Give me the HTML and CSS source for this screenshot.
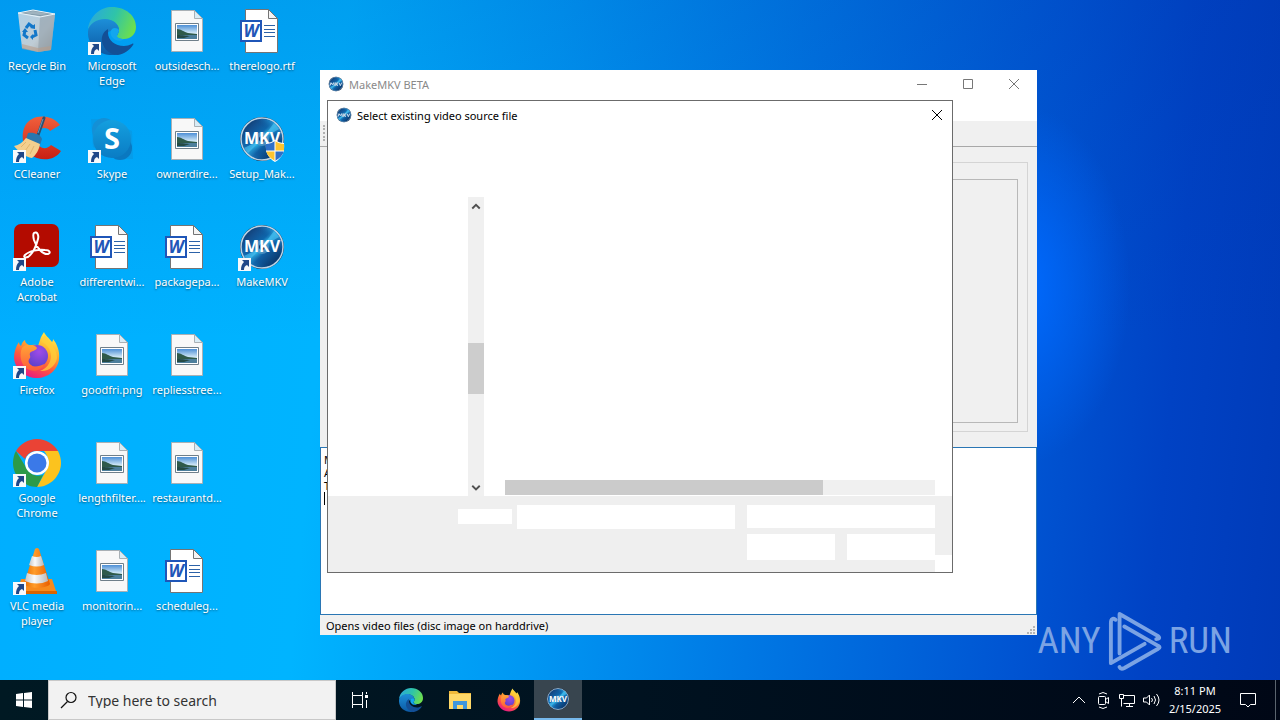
FILE: index.html
```html
<!DOCTYPE html>
<html lang="en">
<head>
  <meta charset="UTF-8" />
  <meta name="viewport" content="width=device-width, initial-scale=1.0"/>
  <title>Desktop</title>
  <link rel="stylesheet" href="styles.css">
</head>
<body>

<!-- shared icons -->
<svg class="sprite" aria-hidden="true">
  <defs>
    <linearGradient id="binFront" x1="0" y1="0" x2="1" y2="1"><stop offset="0" stop-color="#b9d3e6"/><stop offset=".6" stop-color="#c9cfd4"/><stop offset="1" stop-color="#a99f97"/></linearGradient>
    <linearGradient id="edgeTop" x1="0" y1=".3" x2="1" y2=".6"><stop offset="0" stop-color="#2aa9dc"/><stop offset=".5" stop-color="#2fc4a8"/><stop offset="1" stop-color="#6fe04a"/></linearGradient>
    <linearGradient id="edgeLow" x1="0" y1="0" x2="0" y2="1"><stop offset="0" stop-color="#1d8fd8"/><stop offset="1" stop-color="#0c59a4"/></linearGradient>
    <linearGradient id="sky" x1="0" y1="0" x2="0" y2="1"><stop offset="0" stop-color="#4d8fd6"/><stop offset=".6" stop-color="#d6ecf8"/><stop offset="1" stop-color="#7fb0cc"/></linearGradient>
    <linearGradient id="skypeBg" x1="0" y1="0" x2="0" y2="1"><stop offset="0" stop-color="#149fdf"/><stop offset="1" stop-color="#0a7cc4"/></linearGradient>
    <linearGradient id="ccRed" x1="0" y1="0" x2="0" y2="1"><stop offset="0" stop-color="#f0603c"/><stop offset="1" stop-color="#c81f14"/></linearGradient>
    <linearGradient id="disc" x1="0" y1="0" x2="1" y2="1"><stop offset="0" stop-color="#0d2a55"/><stop offset=".25" stop-color="#14508f"/><stop offset=".42" stop-color="#0e66ac"/><stop offset=".5" stop-color="#2bb0e4"/><stop offset=".6" stop-color="#0f5fa4"/><stop offset="1" stop-color="#08204a"/></linearGradient>
    <linearGradient id="discShine" x1="1" y1="0" x2="0" y2="1"><stop offset=".1" stop-color="#30b6f0" stop-opacity=".9"/><stop offset=".35" stop-color="#0a4a90" stop-opacity="0"/><stop offset=".65" stop-color="#0a4a90" stop-opacity="0"/><stop offset=".95" stop-color="#2a9cdc" stop-opacity=".8"/></linearGradient>
    <linearGradient id="ffFlame" x1=".8" y1="0" x2=".3" y2="1"><stop offset="0" stop-color="#fff44f"/><stop offset=".35" stop-color="#ffb02e"/><stop offset=".65" stop-color="#ff5a3c"/><stop offset="1" stop-color="#e61587"/></linearGradient>
    <linearGradient id="ffTail" x1="0" y1="0" x2="0" y2="1"><stop offset="0" stop-color="#ffa436"/><stop offset="1" stop-color="#ff5b3a"/></linearGradient>
    <radialGradient id="ffGlobe" cx=".6" cy=".3" r=".8"><stop offset="0" stop-color="#a04be8"/><stop offset="1" stop-color="#5540c8"/></radialGradient>
    <linearGradient id="cone" x1="0" y1="0" x2="1" y2="0"><stop offset="0" stop-color="#e66a00"/><stop offset=".4" stop-color="#ff9c2a"/><stop offset="1" stop-color="#e85d00"/></linearGradient>
    <linearGradient id="coneWhite" x1="0" y1="0" x2="1" y2="0"><stop offset="0" stop-color="#c4c4c4"/><stop offset=".4" stop-color="#fafafa"/><stop offset="1" stop-color="#b9b9b9"/></linearGradient>
  </defs>

  <symbol id="i-bin" viewBox="0 0 48 48">
    <path d="M5 6 L20 3 L42 7 L38 43 L25 45 L9 41 Z" fill="url(#binFront)" opacity=".95"/>
    <path d="M5 6 L20 3 L42 7 L27 9 Z" fill="#7e97a6"/>
    <path d="M9 6 L20 4 L37 7 L27 8 Z" fill="#9fb3bf"/>
    <path d="M27 9 L42 7 L38 43 L25 45 Z" fill="#8d9ba6" opacity=".55"/>
    <path d="M9 37 L25 41 L38 39 L38 43 L25 45 L9 42 Z" fill="#b79c8a" opacity=".6"/>
    <path d="M5 6 L20 3 L42 7 L27 10 Z" fill="none" stroke="#e6f2f9"/>
    <g fill="none" stroke="#1377c9" stroke-width="3"><path d="M13 21l3-4 4 3"/><path d="M22 23l1 5-4 2"/><path d="M15 31l-4-3 1-4"/></g>
    <g fill="#1377c9"><path d="M22 17v5l-5-1z"/><path d="M20 27v6l-3-3z"/><path d="M9 25l3-4 3 4z"/></g>
  </symbol>

  <symbol id="i-edge" viewBox="0 0 48 48">
    <path d="M0 22C2 8 13 0 24 0c14 0 24 9 24 20 0 8-6 12-12 12-4 0-7-1-7-3s2-3 2-6c0-5-5-10-12-10C10 13 3 17 0 22z" fill="url(#edgeTop)"/>
    <path d="M0 24C1 17 8 12 17 12c8 0 14 5 14 11 0 3-2 4-2 6l-4-6c-5 1-8 5-8 10 0 7 5 13 13 15-2 0-4 0-6 0C10 48-1 38 0 24z" fill="url(#edgeLow)"/>
    <path d="M20 22c-5 3-7 8-6 13 2 8 9 13 16 13 6-1 12-5 15-10 1-1 0-2-1-1-3 1-5 2-8 2-9 0-16-6-16-13 0-1 0-3 0-4z" fill="#134f96"/>
    <path d="M24 22c2-2 6-1 7 1 0 3-2 4-2 6s3 3 7 3c-3 3-9 2-12-2-2-3-2-6 0-8z" fill="#12a6ef"/>
  </symbol>

  <symbol id="i-picture" viewBox="0 0 48 48">
    <path d="M8.500 3.500h23l8 8v33h-31z" fill="#f8f8f8" stroke="#a9b0b5"/>
    <path d="M31.500 3.500v8h8z" fill="#d8ecf6" stroke="#a9b0b5"/>
    <path d="M12.500 16.500h23v17h-23z" fill="#fff" stroke="#6f7f8a"/>
    <path d="M14 18h20v14H14z" fill="url(#sky)"/>
    <path d="M14 22c4 0 7 3 11 4l9 1v2H14z" fill="#2f5a4a"/>
    <path d="M14 28h20v4H14z" fill="#4d7f9c"/>
    <path d="M14 28c6 0 9 1 13 1l-6 2h-7z" fill="#254a44"/>
  </symbol>

  <symbol id="i-word" viewBox="0 0 48 48">
    <path d="M7.500 2.500h23l9 9v34h-32z" fill="#fff" stroke="#747474"/>
    <path d="M30.500 2.500v9h9z" fill="#f4f4f4" stroke="#747474"/>
    <path d="M26 18.500h11M26 22.500h11M26 25.500h11M26 29.500h11" stroke="#2c62a8"/>
    <path d="M2 13h22v22H2z" fill="#1f56b8"/>
    <path d="M4 15h18v18H4z" fill="#fff"/>
  </symbol>

  <symbol id="i-ccleaner" viewBox="0 0 48 48">
    <path d="M47 10C38-2 18-1 12 11c-6 12 0 28 12 32 9 3 19 1 24-7l-10-6c-4 5-12 4-14-3-2-8 2-14 7-14 3 0 5 1 6 3z" fill="url(#ccRed)"/>
    <path d="M31 3l-7 20" stroke="#2d4f6e" stroke-width="3" stroke-linecap="round"/>
    <path d="M30 4l-5 14" stroke="#5f96bd"/>
    <path d="M15 18c5-1 12 1 14 6l-2 6-14-6z" fill="#2877ae"/>
    <path d="M13 23l14 6c-1 6-4 11-8 14-7-1-13-6-18-12 5-1 9-4 12-8z" fill="#f3cf8e"/>
    <path d="M13 27l-5 5M17 29l-5 7M21 31l-4 8" stroke="#e2b46c"/>
  </symbol>

  <symbol id="i-skype" viewBox="0 0 48 48">
    <path d="M3 4h15l26 12 1 28H30L5 32z" fill="#0f8fd4" opacity=".4"/>
    <circle cx="16" cy="15" r="12" fill="#1490d6"/>
    <circle cx="32" cy="33" r="12" fill="#0a78c0"/>
    <circle cx="24" cy="24" r="19" fill="url(#skypeBg)"/>
  </symbol>

  <symbol id="i-disc" viewBox="0 0 48 48">
    <circle cx="24" cy="24" r="22" fill="#0a1a33"/>
    <circle cx="24" cy="24" r="21" fill="url(#disc)" stroke="#b9d3e6" stroke-width="1.500"/>
    <circle cx="24" cy="24" r="20" fill="url(#discShine)"/>
    <path d="M24 24L36 8l5 6zM24 24L10 38l-4-5z" fill="#4cc8f6" opacity=".6"/>
    <circle cx="24" cy="24" r="7" fill="#5b9cc8" opacity=".7"/>
    <circle cx="24" cy="24" r="3" fill="#16325c"/>
  </symbol>

  <symbol id="i-shield" viewBox="0 0 20 22">
    <path d="M10 0c3 2 6 3 9 3 1 9-2 15-9 19C3 18 0 12 1 3c3 0 6-1 9-3z" fill="#fff"/>
    <path d="M10 1v10H1C1 8 1 6 1 4c3 0 6-1 9-3z" fill="#2e70c8"/>
    <path d="M10 1c3 2 6 3 9 3 0 2 0 4 0 7h-9z" fill="#fcc430"/>
    <path d="M1 11h9v10C5 18 2 15 1 11z" fill="#fcc430"/>
    <path d="M19 11h-9v10c5-3 8-6 9-10z" fill="#2e70c8"/>
    <path d="M10 1v20M1 11h18" stroke="#fff"/>
  </symbol>

  <symbol id="i-acrobat" viewBox="0 0 48 48">
    <rect x="1" y="1" width="45" height="43" rx="7" fill="#b30b00"/>
    <path d="M21 10c3-2 5 2 4 6-2 8-6 15-10 18-3 1-5 0-3-2 4-4 14-6 20-5 5 0 6 3 3 4-5 1-12-7-14-14-1-4-1-6 0-7z" fill="none" stroke="#fff" stroke-width="2"/>
  </symbol>

  <symbol id="i-firefox" viewBox="0 0 48 48">
    <path d="M31 1c1 3 5 6 8 10 1-1 1-2 1-3 4 5 7 12 6 20-1 11-11 19-22 19S2 39 1 27c0-6 2-12 5-16 0 2 1 3 2 4 1-3 2-5 4-6 0 3 2 4 4 5 4 0 7-1 9 1l2-6c1-4 3-6 4-8z" fill="url(#ffFlame)"/>
    <circle cx="24" cy="25" r="11" fill="url(#ffGlobe)"/>
    <path d="M9 17c2-3 6-4 9-2 2-1 5 0 6 2-1 3-6 3-7 5-1 2 1 3 0 5-2 2-2 5 1 7 3 3 9 1 13-1-2 7-12 9-18 4C8 33 6 24 9 17z" fill="url(#ffTail)"/>
    <path d="M29 11c5 2 9 8 9 14 0 7-5 13-11 15 9 1 16-6 17-13 0-9-6-13-9-19l-3-4c-2 2-3 4-3 7z" fill="#ffcf3a" opacity=".75"/>
  </symbol>

  <symbol id="i-chrome" viewBox="0 0 48 48">
    <path d="M24 0c9 0 17 5 21 12H24c-6 0-10 3-12 8L3 12C7 5 15 0 24 0z" fill="#ea4335"/>
    <path d="M45 12c2 4 3 8 3 12 0 13-11 24-24 24l10-18c3-5 2-12-3-18z" fill="#fcc31e"/>
    <path d="M24 48C11 48 0 37 0 24c0-4 1-9 3-12l11 18c3 6 10 8 16 6z" fill="#2c9a48"/>
    <circle cx="24" cy="24" r="12" fill="#fff"/>
    <circle cx="24" cy="24" r="9.500" fill="#3b79e8"/>
  </symbol>

  <symbol id="i-vlc" viewBox="0 0 48 48">
    <path d="M8 32h31l5 15H4z" fill="#f78a1c"/>
    <path d="M4 44h40v3H4z" fill="#d96400"/>
    <path d="M22 2q2-2 4 0l11 35c-3 5-22 5-26 0z" fill="url(#cone)"/>
    <path d="M19 9q5 2 9 0l3 9q-7 3-15 0z" fill="url(#coneWhite)"/>
    <path d="M14 26q10 4 19 0l2 8q-11 5-23 0z" fill="url(#coneWhite)"/>
  </symbol>

  <symbol id="i-shortcut" viewBox="0 0 13 13">
    <path d="M0 0h13v13H0z" fill="#f7f9fb"/>
    <path d="M4 2h7v7L9 7c-2 1-3 2-3 5H3c0-4 1-6 3-8z" fill="#1f4788"/>
  </symbol>

  <symbol id="i-folder" viewBox="0 0 24 24">
    <path d="M1 3h8l2 2h12v16H1z" fill="#f0b93a"/>
    <path d="M1 6h22v15H1z" fill="#ffd868"/>
    <path d="M5 13h14v8h-4v-4H9v4H5z" fill="#3f96dc"/>
  </symbol>

  <symbol id="i-close" viewBox="0 0 10 10"><path d="M0 0l10 10M10 0L0 10" fill="none" stroke="currentColor"/></symbol>
</svg>

<main class="desktop">
  <ul class="icons">
    <li class="icon"><span class="pic"><svg><use href="#i-bin"/></svg></span>Recycle Bin</li>
    <li class="icon"><span class="pic"><svg><use href="#i-ccleaner"/></svg><svg class="arrow"><use href="#i-shortcut"/></svg></span>CCleaner</li>
    <li class="icon"><span class="pic"><svg><use href="#i-acrobat"/></svg><svg class="arrow"><use href="#i-shortcut"/></svg></span>Adobe<br>Acrobat</li>
    <li class="icon"><span class="pic"><svg><use href="#i-firefox"/></svg><svg class="arrow"><use href="#i-shortcut"/></svg></span>Firefox</li>
    <li class="icon"><span class="pic"><svg><use href="#i-chrome"/></svg><svg class="arrow"><use href="#i-shortcut"/></svg></span>Google<br>Chrome</li>
    <li class="icon"><span class="pic"><svg><use href="#i-vlc"/></svg><svg class="arrow"><use href="#i-shortcut"/></svg></span>VLC media<br>player</li>

    <li class="icon"><span class="pic"><svg><use href="#i-edge"/></svg><svg class="arrow"><use href="#i-shortcut"/></svg></span>Microsoft<br>Edge</li>
    <li class="icon"><span class="pic"><svg viewBox="0 0 48 48"><use href="#i-skype"/><text x="24" y="34" class="skype-letter">S</text></svg><svg class="arrow"><use href="#i-shortcut"/></svg></span>Skype</li>
    <li class="icon"><span class="pic"><svg viewBox="0 0 48 48"><use href="#i-word"/><text x="13" y="30" class="word-letter">W</text></svg></span>differentwi...</li>
    <li class="icon"><span class="pic"><svg><use href="#i-picture"/></svg></span>goodfri.png</li>
    <li class="icon"><span class="pic"><svg><use href="#i-picture"/></svg></span>lengthfilter....</li>
    <li class="icon"><span class="pic"><svg><use href="#i-picture"/></svg></span>monitorin...</li>

    <li class="icon"><span class="pic"><svg><use href="#i-picture"/></svg></span>outsidesch...</li>
    <li class="icon"><span class="pic"><svg><use href="#i-picture"/></svg></span>ownerdire...</li>
    <li class="icon"><span class="pic"><svg viewBox="0 0 48 48"><use href="#i-word"/><text x="13" y="30" class="word-letter">W</text></svg></span>packagepa...</li>
    <li class="icon"><span class="pic"><svg><use href="#i-picture"/></svg></span>repliesstree...</li>
    <li class="icon"><span class="pic"><svg><use href="#i-picture"/></svg></span>restaurantd...</li>
    <li class="icon"><span class="pic"><svg viewBox="0 0 48 48"><use href="#i-word"/><text x="13" y="30" class="word-letter">W</text></svg></span>scheduleg...</li>

    <li class="icon"><span class="pic"><svg viewBox="0 0 48 48"><use href="#i-word"/><text x="13" y="30" class="word-letter">W</text></svg></span>therelogo.rtf</li>
    <li class="icon"><span class="pic"><svg viewBox="0 0 48 48"><use href="#i-disc"/><text x="24" y="29" class="mkv-letters">MKV</text></svg><svg class="shield"><use href="#i-shield"/></svg></span>Setup_Mak...</li>
    <li class="icon"><span class="pic"><svg viewBox="0 0 48 48"><use href="#i-disc"/><text x="24" y="29" class="mkv-letters">MKV</text></svg><svg class="arrow"><use href="#i-shortcut"/></svg></span>MakeMKV</li>
  </ul>

  <div class="watermark">
    <span>ANY</span>
    <svg viewBox="0 0 56 62">
      <g fill="none" stroke="currentColor" stroke-width="4" stroke-linejoin="round" stroke-linecap="round">
        <path d="M8 9C5 7 3 8 3 12v42l35-20"/>
        <path d="M12 44V3l40 23c2 2 1 3-2 3"/>
        <path d="M17 16l35 20c2 1 2 2 0 3L17 59c-2 1-4 1-5-1"/>
        <path d="M38 34L17 46" stroke-width="2"/>
      </g>
    </svg>
    <span>RUN</span>
  </div>

  <section class="window">
    <header class="titlebar">
      <svg class="app-icon" viewBox="0 0 48 48"><use href="#i-disc"/><path d="M6 29l3-9 4 6 4-6 2 9m4-9v9m7-9l-6 4 6 5m3-9l4 9 4-9" fill="none" stroke="#d5e2ee" stroke-width="3"/></svg>
      <span class="title">MakeMKV BETA</span>
      <button class="win-btn" aria-label="Minimize"><svg viewBox="0 0 10 10"><path d="M0 5.500h10" stroke="currentColor"/></svg></button>
      <button class="win-btn" aria-label="Maximize"><svg viewBox="0 0 10 10"><path d="M.5.5h9v9h-9z" fill="none" stroke="currentColor"/></svg></button>
      <button class="win-btn" aria-label="Close"><svg><use href="#i-close"/></svg></button>
    </header>
    <div class="toolbar"><span class="grip"></span></div>
    <div class="source"><div class="group"><div class="frame"></div></div></div>
    <div class="log">M<br>A<br>T<br><span class="caret"></span></div>
    <footer class="statusbar">
      <span>Opens video files (disc image on harddrive)</span>
      <svg class="size-grip" viewBox="0 0 9 9"><path d="M7 0h2v2H7zM7 3h2v2H7zM7 6h2v2H7zM4 3h2v2H4zM4 6h2v2H4zM1 6h2v2H1z" fill="#b4b4b4"/></svg>
    </footer>

    <section class="dialog">
      <header class="dialog-title">
        <svg class="app-icon" viewBox="0 0 48 48"><use href="#i-disc"/><path d="M6 29l3-9 4 6 4-6 2 9m4-9v9m7-9l-6 4 6 5m3-9l4 9 4-9" fill="none" stroke="#d5e2ee" stroke-width="3"/></svg>
        <span class="title">Select existing video source file</span>
        <button class="dialog-close" aria-label="Close"><svg><use href="#i-close"/></svg></button>
      </header>
      <div class="browser">
        <div class="tree"></div>
        <div class="vscroll">
          <svg viewBox="0 0 8 8"><path d="M1 6l3-3 3 3" fill="none" stroke="#505050" stroke-width="1.500"/></svg>
          <span class="vthumb"></span>
          <svg viewBox="0 0 8 8"><path d="M1 3l3 3 3-3" fill="none" stroke="#505050" stroke-width="1.500"/></svg>
        </div>
        <div class="files"><div class="hscroll"><span class="hthumb"></span></div></div>
      </div>
      <form class="dialog-form">
        <label class="name-label" for="filename"></label>
        <input class="name-field" type="text" id="filename">
        <div class="choices">
          <select class="type-field" aria-label="File type"><option></option></select>
          <button class="action" type="button" aria-label="Open"></button>
          <button class="action" type="button" aria-label="Cancel"></button>
        </div>
        <span class="corner"></span>
      </form>
    </section>
  </section>
</main>

<footer class="taskbar">
  <button class="task start" aria-label="Start"><svg class="start-logo" viewBox="0 0 16 16"><path d="M0 2l7-1v6.500H0zM8 1l8-1v7.500H8zM0 8.500h7V15l-7-1zM8 8.500h8V16l-8-1z" fill="#fff"/></svg></button>
  <label class="search">
    <svg viewBox="0 0 18 18"><g fill="none" stroke="#111" stroke-width="1.200"><circle cx="11" cy="6.500" r="5"/><path d="M7.500 10.500L1 17"/></g></svg>
    <input type="text" placeholder="Type here to search" aria-label="Search">
  </label>
  <button class="task" aria-label="Task View"><svg class="line-icon" viewBox="0 0 18 18"><g fill="none" stroke="#fff"><path d="M1.500 1v3.500h10V1M1.500 17v-3.500h10V17M1.500 4.500v9M11.500 4.500v9M15.500 1v2M15.500 9v8"/></g><path d="M14 4h3v3h-3z" fill="#fff"/></svg></button>
  <nav class="apps">
    <button class="task" aria-label="Edge"><svg><use href="#i-edge"/></svg></button>
    <button class="task" aria-label="Explorer"><svg><use href="#i-folder"/></svg></button>
    <button class="task" aria-label="Firefox"><svg><use href="#i-firefox"/></svg></button>
    <button class="task active" aria-label="MakeMKV"><svg viewBox="0 0 48 48"><use href="#i-disc"/><text x="24" y="29" class="mkv-letters">MKV</text></svg></button>
  </nav>
  <div class="tray">
    <svg viewBox="0 0 18 18"><path d="M3 12l6-6 6 6" fill="none" stroke="#fff"/></svg>
    <svg viewBox="0 0 18 18"><g fill="none" stroke="#fff"><rect x="4.500" y="5.500" width="7" height="8" rx="1"/><path d="M11.500 8.500l3-2v6l-3-2M5 3q4-3 8 0M5 16q4 3 8 0"/></g></svg>
    <svg viewBox="0 0 18 18"><g fill="none" stroke="#fff"><path d="M5.500 4.500h11v8h-11M11.500 12.500v3M8 15.500h7M1.500 3.500h4v4h-4zM3.500 7.500v8"/></g></svg>
    <svg viewBox="0 0 18 18"><g fill="none" stroke="#fff"><path d="M1.500 7v4h3l3 3V4l-3 3zM9.500 7q2 2 0 4M12 5q3 4 0 8M14.500 3q5 6 0 12"/></g></svg>
  </div>
  <div class="clock">8:11 PM<br>2/15/2025</div>
  <button class="task notify" aria-label="Notifications"><svg class="line-icon" viewBox="0 0 18 18"><path d="M1.500 2.500h15v11h-5l-2.500 2.500-2.500-2.500h-5z" fill="none" stroke="#fff"/></svg></button>
</footer>

</body>
</html>
```
FILE: styles.css
```css
* {
  box-sizing: border-box;
}
body {
  margin: 0;
  height: 100vh;
  display: flex;
  flex-direction: column;
  overflow: hidden;
  font-family: "Noto Sans", "Open Sans", sans-serif;
  font-size: 11px;
  line-height: 15px;
  color: #000;
}
button, input, select {
  font: inherit;
  border: 0;
  border-radius: 0;
  padding: 0;
  margin: 0;
  background: none;
  appearance: none;
}
button {
  display: flex;
  align-items: center;
  justify-content: center;
}
.sprite {
  position: absolute;
  width: 0;
  height: 0;
}
.word-letter {
  font: italic bold 17px "Noto Sans", sans-serif;
  fill: #1f56b8;
  text-anchor: middle;
  text-shadow: none;
}
.skype-letter {
  font: bold 29px "Noto Sans", sans-serif;
  fill: #fff;
  text-anchor: middle;
  text-shadow: none;
}
.mkv-letters {
  font: bold 16px "Noto Sans", sans-serif;
  fill: #fff;
  text-anchor: middle;
  text-shadow: none;
}

/* desktop */
.desktop {
  position: relative;
  flex: 1;
  min-height: 0;
  background:
    radial-gradient(ellipse 110px 180px at 1020px 285px, #006aff 0%, rgba(0, 104, 255, 0) 100%),
    linear-gradient(180deg, rgba(0, 50, 160, 0.16), rgba(0, 60, 170, 0) 50%),
    linear-gradient(95deg, #00aeff 0%, #00b4ff 26%, #009af4 42%, #0078e4 60%, #0054d2 80%, #0042c4 90%, #003ab8 100%);
}
.icons {
  list-style: none;
  margin: 0;
  padding: 7px 0 0;
  display: grid;
  grid-auto-flow: column;
  grid-template-rows: repeat(6, 108px);
  grid-auto-columns: 74px;
  column-gap: 1px;
  justify-content: start;
}
.icon {
  text-align: center;
  white-space: nowrap;
  color: #fff;
  text-shadow: 0 1px 2px rgba(0, 0, 0, 0.5);
}
.pic {
  position: relative;
  display: block;
  width: 48px;
  height: 48px;
  margin: 0 auto 3px;
}
.pic svg {
  display: block;
  width: 48px;
  height: 48px;
}
.pic .arrow {
  position: absolute;
  left: 0;
  bottom: 0;
  width: 13px;
  height: 13px;
}
.pic .shield {
  position: absolute;
  right: 1px;
  bottom: 1px;
  width: 20px;
  height: 22px;
}
.watermark {
  position: absolute;
  right: 48px;
  bottom: 8px;
  display: flex;
  align-items: center;
  gap: 7px;
  font-family: "Roboto Condensed", "Liberation Sans Narrow", "Liberation Sans", sans-serif;
  font-size: 37px;
  line-height: 62px;
  color: #7ba3e4;
}
.watermark svg {
  width: 54px;
  height: 62px;
}

/* main window */
.window {
  position: absolute;
  left: 25%;
  top: 70px;
  bottom: 45px;
  width: 56%;
  display: flex;
  flex-direction: column;
  background: #f0f0f0;
}
.titlebar {
  flex: 0 0 51px;
  display: flex;
  align-items: flex-start;
  background: #fff;
  color: #8a8a8a;
}
.app-icon {
  width: 16px;
  height: 16px;
  margin: 6px 5px 0 8px;
}
.title {
  flex: 1;
  line-height: 30px;
}
.win-btn {
  width: 46px;
  height: 28px;
  color: #777;
}
.win-btn svg, .dialog-close svg {
  width: 10px;
  height: 10px;
}
.toolbar {
  flex: 0 0 26px;
  padding: 4px 3px;
  border-bottom: 1px solid #a8a8a8;
}
.grip {
  display: block;
  height: 16px;
  width: 3px;
  border-left: 2px dotted #b0b0b0;
}
.source {
  flex: 1;
  padding: 15px 9px;
}
.group {
  height: 100%;
  padding: 16px 9px 8px;
  border: 1px solid #d4d4d4;
}
.frame {
  height: 100%;
  border: 1px solid #b8b8b8;
}
.log {
  flex: 0 0 168px;
  padding: 5px 3px;
  line-height: 13px;
  background: #fff;
  border: 1px solid #2a76b4;
}
.caret {
  display: inline-block;
  width: 1px;
  height: 13px;
  background: #000;
}
.statusbar {
  flex: 0 0 20px;
  display: flex;
  align-items: center;
  justify-content: space-between;
  padding: 0 2px 0 6px;
}
.size-grip {
  width: 9px;
  height: 9px;
  align-self: flex-end;
}

/* file dialog */
.dialog {
  position: absolute;
  top: 30px;
  right: 84px;
  bottom: 62px;
  left: 7px;
  display: flex;
  flex-direction: column;
  background: #fff;
  border: 1px solid #6b6b6b;
}
.dialog-title {
  flex: 0 0 96px;
  display: flex;
  align-items: flex-start;
}
.dialog-close {
  width: 30px;
  height: 28px;
}
.browser {
  flex: 1;
  display: flex;
}
.tree {
  flex: 0 0 140px;
}
.vscroll {
  flex: 0 0 16px;
  display: flex;
  flex-direction: column;
  align-items: center;
  justify-content: space-between;
  padding: 4px 0;
  background: #f0f0f0;
}
.vscroll svg {
  width: 10px;
  height: 10px;
}
.vthumb {
  width: 16px;
  height: 51px;
  margin-top: 44px;
  background: #cdcdcd;
}
.files {
  flex: 1;
  display: flex;
  align-items: flex-end;
  padding: 0 17px 1px 21px;
}
.hscroll {
  flex: 1;
  height: 15px;
  background: #f0f0f0;
}
.hthumb {
  display: block;
  width: 74%;
  height: 15px;
  background: #cbcbcb;
}
.dialog-form {
  position: relative;
  flex: 0 0 76px;
  display: flex;
  align-items: flex-start;
  padding: 9px 17px 12px 130px;
  background: #efefef;
}
.name-label {
  width: 54px;
  height: 15px;
  margin: 4px 5px 0 0;
  background: #fff;
}
.name-field {
  flex: 1;
  min-width: 0;
  height: 24px;
  background: #fff;
}
.choices {
  flex: 0 0 188px;
  margin-left: 12px;
  display: grid;
  grid-template-columns: 1fr 1fr;
  gap: 6px 12px;
}
.type-field {
  grid-column: 1 / -1;
  height: 23px;
  background: #fff;
}
.action {
  height: 26px;
  background: #fff;
}
.corner {
  position: absolute;
  right: 0;
  bottom: 0;
  width: 17px;
  height: 17px;
  background: #fff;
}

/* taskbar */
.taskbar {
  flex: 0 0 40px;
  display: flex;
  background: linear-gradient(90deg, #001923 0%, #001220 50%, #000716 100%);
  color: #fff;
}
.task {
  flex: 0 0 48px;
  height: 40px;
}
.task svg {
  width: 24px;
  height: 24px;
}
.task .start-logo {
  width: 16px;
  height: 16px;
}
.task .line-icon {
  width: 18px;
  height: 18px;
}
.search {
  flex: 0 0 288px;
  display: flex;
  align-items: center;
  gap: 10px;
  padding: 0 11px;
  background: #f2f2f2;
  border: 1px solid #c8c8c8;
}
.search svg {
  flex: 0 0 18px;
  height: 18px;
}
.search input {
  flex: 1;
  min-width: 0;
  font-size: 14px;
}
.search input::placeholder {
  color: #333;
  opacity: 1;
}
.apps {
  display: flex;
  gap: 1px;
  margin-left: 3px;
}
.active {
  background: #38454f;
  border-bottom: 2px solid #76b9ed;
}
.tray {
  display: flex;
  align-items: center;
  gap: 6px;
  margin: 0 2px 0 auto;
}
.tray svg {
  width: 18px;
  height: 18px;
}
.clock {
  width: 66px;
  padding-top: 2px;
  text-align: center;
  line-height: 18px;
}
.notify {
  margin-right: 4px;
  padding-right: 8px;
  border-right: 1px solid #5a646e;
}
```
